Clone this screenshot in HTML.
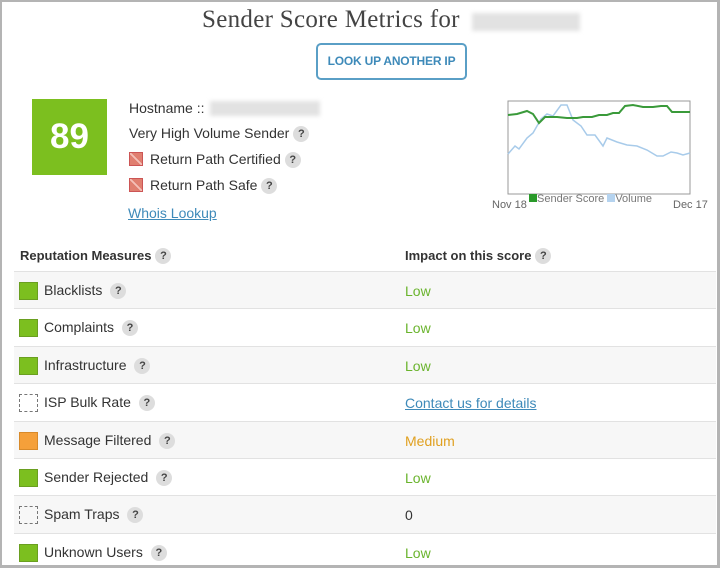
<!DOCTYPE html>
<html><head><style>
*{margin:0;padding:0;box-sizing:border-box}
body{width:720px;height:568px;overflow:hidden;background:#fff;font-family:"Liberation Sans",sans-serif;color:#333;position:relative}
.frame{position:absolute;left:0;top:0;width:720px;height:568px;border:2px solid #b4b4b4;border-right-width:3px;border-bottom-width:3px}
.abs{position:absolute}
h1{position:absolute;left:202px;top:6px;font-family:"Liberation Serif",serif;font-weight:normal;font-size:25px;color:#444;letter-spacing:.3px}
.blur{background:#e2e2e2;filter:blur(2px)}
.btn{left:316px;top:43px;width:151px;height:37px;border:2px solid #5a9fc6;border-radius:5px;color:#3e8ab9;font-size:12px;font-weight:bold;text-align:center;line-height:33px;letter-spacing:-.2px}
.score{left:32px;top:99px;width:75px;height:76px;background:#7cbf1f;color:#fff;font-weight:bold;font-size:35px;text-align:center;line-height:76px}
.info{font-size:14px;color:#333}
.q{display:inline-block;width:16px;height:16px;border-radius:50%;background:#ddd;color:#444;font-size:11px;font-weight:bold;text-align:center;line-height:16px;vertical-align:1px;margin-left:4px}
.x{display:inline-block;width:14px;height:14px;background:#e07f70 linear-gradient(45deg,transparent 45%,#f4c0b8 45%,#f4c0b8 55%,transparent 55%);border:1px solid #c55;vertical-align:-2px;margin-right:7px}
a{color:#3e8ab9;text-decoration:underline}
.row{position:absolute;left:14px;width:702px;height:37.4px;border-top:1px solid #e2e2e2;font-size:14px}
.row.s{background:#f7f7f7}
.row .sq{position:absolute;left:5px;top:10px;width:19px;height:18px}
.row .lab{position:absolute;left:30px;top:10px}
.row .imp{position:absolute;left:391px;top:11px}
.g{background:#7cbf1f;border:1px solid #6a9f20}
.o{background:#f5a03a;border:1px solid #d88a2a}
.d{border:1px dashed #777}
.low{color:#6ab42d}
</style></head><body>
<div class="frame"></div>
<h1>Sender Score Metrics for</h1>
<div class="abs blur" style="left:472px;top:13px;width:108px;height:18px"></div>
<div class="abs btn">LOOK UP ANOTHER IP</div>
<div class="abs score">89</div>
<div class="abs info" style="left:129px;top:100px">Hostname ::</div>
<div class="abs blur" style="left:210px;top:101px;width:110px;height:15px"></div>
<div class="abs info" style="left:129px;top:125px">Very High Volume Sender<span class="q">?</span></div>
<div class="abs info" style="left:129px;top:151px"><span class="x"></span>Return Path Certified<span class="q">?</span></div>
<div class="abs info" style="left:129px;top:177px"><span class="x"></span>Return Path Safe<span class="q">?</span></div>
<div class="abs info" style="left:128px;top:205px"><a>Whois Lookup</a></div>
<svg class="abs" style="left:507px;top:100px" width="184" height="95">
<rect x="1" y="1" width="182" height="93" fill="#fff" stroke="#999"/>
<polyline fill="none" stroke="#a8cbea" stroke-width="1.5" points="1,54 8,46 12,49 20,38 26,33 34,19 40,14 46,16 54,5 60,5 66,20 74,26 80,35 88,35 96,46 100,38 110,42 120,45 130,46 140,50 150,56 156,56 164,52 170,53 176,55 183,53"/>
<polyline fill="none" stroke="#3a9a3a" stroke-width="2" points="1,15 10,14 20,11 26,14 32,23 38,17 50,17 60,18 70,18 76,17 85,17 92,15 100,15 106,13 112,13 118,6 126,5 136,7 146,7 154,6 160,6 165,12 172,12 183,12"/>
</svg>
<div class="abs" style="left:492px;top:199px;font-size:11px;color:#666">Nov 18</div>
<div class="abs" style="left:529px;top:193px;font-size:11px;color:#777"><span style="display:inline-block;width:8px;height:8px;background:#2a9a2a"></span>Sender Score <span style="display:inline-block;width:8px;height:8px;background:#b5d3ef"></span>Volume</div>
<div class="abs" style="left:673px;top:199px;font-size:11px;color:#666">Dec 17</div>
<div class="abs" style="left:20px;top:248px;font-size:13px;font-weight:bold">Reputation Measures<span class="q">?</span></div>
<div class="abs" style="left:405px;top:248px;font-size:13px;font-weight:bold">Impact on this score<span class="q">?</span></div>
<div class="row s" style="top:271px"><div class="sq g"></div><div class="lab">Blacklists<span class="q" style="margin-left:8px">?</span></div><div class="imp low">Low</div></div>
<div class="row" style="top:308.4px"><div class="sq g"></div><div class="lab">Complaints<span class="q" style="margin-left:8px">?</span></div><div class="imp low">Low</div></div>
<div class="row s" style="top:345.8px"><div class="sq g"></div><div class="lab">Infrastructure<span class="q" style="margin-left:8px">?</span></div><div class="imp low">Low</div></div>
<div class="row" style="top:383.2px"><div class="sq d"></div><div class="lab">ISP Bulk Rate<span class="q" style="margin-left:8px">?</span></div><div class="imp"><a>Contact us for details</a></div></div>
<div class="row s" style="top:420.6px"><div class="sq o"></div><div class="lab">Message Filtered<span class="q" style="margin-left:8px">?</span></div><div class="imp" style="color:#e0a020">Medium</div></div>
<div class="row" style="top:458px"><div class="sq g"></div><div class="lab">Sender Rejected<span class="q" style="margin-left:8px">?</span></div><div class="imp low">Low</div></div>
<div class="row s" style="top:495.4px"><div class="sq d"></div><div class="lab">Spam Traps<span class="q" style="margin-left:8px">?</span></div><div class="imp" style="color:#333">0</div></div>
<div class="row" style="top:532.8px"><div class="sq g"></div><div class="lab">Unknown Users<span class="q" style="margin-left:8px">?</span></div><div class="imp low">Low</div></div>
</body></html>
